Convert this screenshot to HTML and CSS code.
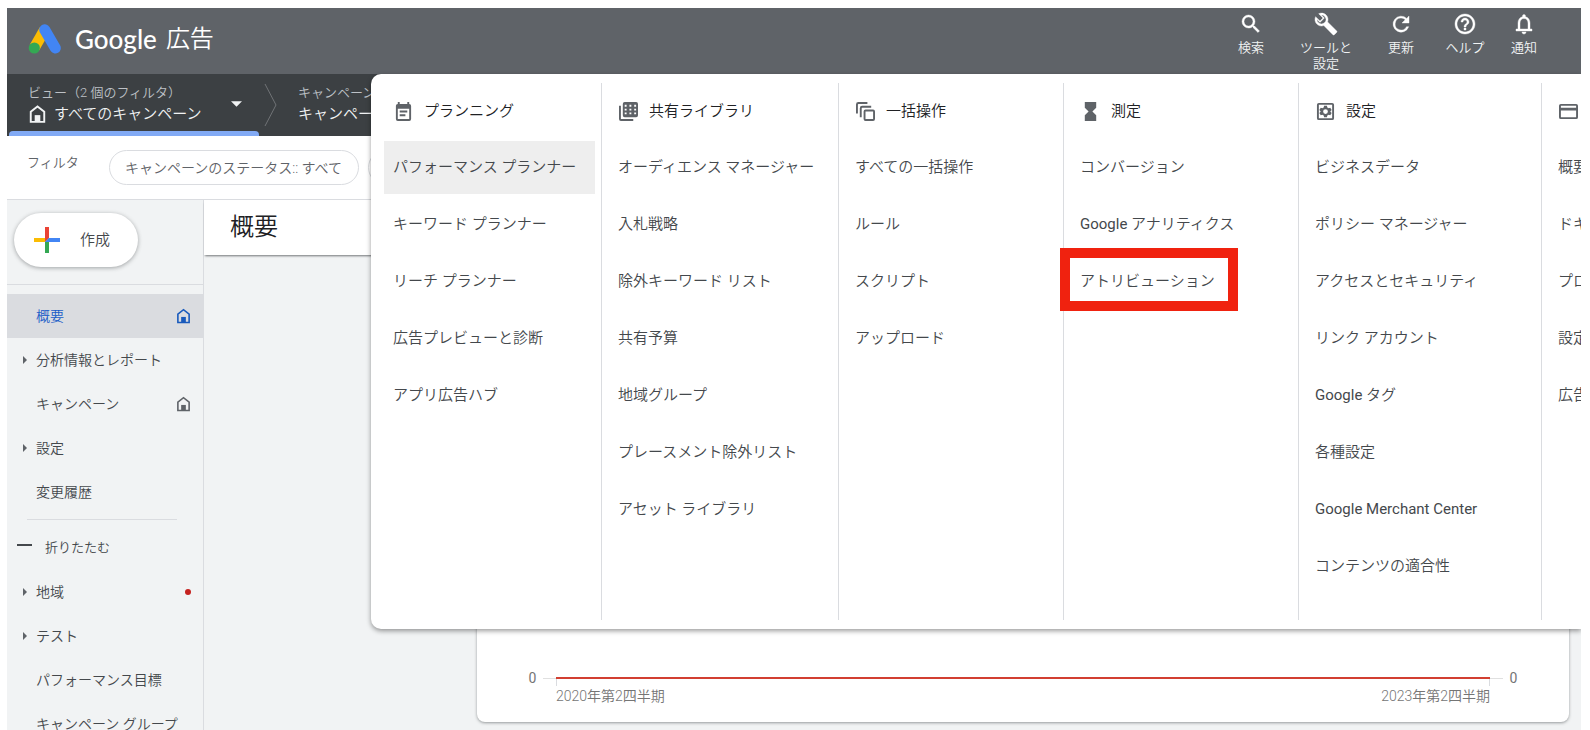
FILE: index.html
```html
<!DOCTYPE html>
<html lang="ja">
<head>
<meta charset="utf-8">
<title>Google 広告</title>
<link rel="stylesheet" href="styles.css">
</head>
<body>
<svg class="sprite" aria-hidden="true">
  <symbol id="house" viewBox="0 0 16 16"><path d="M2 15V6l6-4.700 6 4.700v9z" fill="none" stroke="currentColor" stroke-width="1.700"/><path d="M5.500 9h5v6h-5z" fill="currentColor"/></symbol>
</svg>
<div class="app">
  <header class="topbar">
    <a class="brand" href="#">
      <svg class="brand-mark" viewBox="0 0 34 32" aria-hidden="true">
        <path d="M16.500 7 6.500 24.500" stroke="#fbbc04" stroke-width="11"/>
        <circle cx="6.300" cy="25" r="5.600" fill="#34a853"/>
        <path d="M16.700 6.800 27.300 25" stroke="#4285f4" stroke-width="11" stroke-linecap="round"/>
      </svg>
      <span class="brand-google">Google</span>
      <span class="brand-product">広告</span>
    </a>
    <nav class="tools">
      <button class="tool tool-search"><svg viewBox="0 0 24 24"><path d="M15.500 14h-.79l-.28-.27A6.470 6.470 0 0 0 16 9.500 6.500 6.500 0 1 0 9.500 16c1.610 0 3.090-.59 4.230-1.570l.27.28v.79l5 4.990L20.490 19l-4.990-5zm-6 0C7.010 14 5 11.990 5 9.500S7.010 5 9.500 5 14 7.010 14 9.500 11.990 14 9.500 14z"/></svg><span>検索</span></button>
      <button class="tool tool-setup"><svg viewBox="0 0 24 24"><path fill-rule="evenodd" d="m22.700 19-9.100-9.100c.9-2.300.4-5-1.500-6.900-2-2-5-2.400-7.400-1.300L9 6 6 9 1.600 4.700C.4 7.100.9 10.100 2.900 12.100c1.900 1.900 4.600 2.400 6.900 1.500l9.100 9.100c.4.4 1 .4 1.400 0l2.300-2.300c.5-.4.500-1.100.1-1.400zM4.300 10.600c-.9-.9-1.300-2-1.300-3.200l3 3 4.400-4.400-3-3c1.200 0 2.400.4 3.300 1.400 1.800 1.800 1.800 4.500 0 6.200s-4.700 1.800-6.400 0z"/></svg><span>ツールと<br>設定</span></button>
      <button class="tool tool-refresh"><svg viewBox="0 0 24 24"><path d="M17.700 6.400A8 8 0 1 0 19.700 14.700h-2.200A6 6 0 1 1 12 6c1.700 0 3.100.7 4.200 1.800L13 11h7V4z"/></svg><span>更新</span></button>
      <button class="tool tool-help"><svg viewBox="0 0 24 24"><path d="M11 18h2v-2h-2v2zm1-16C6.480 2 2 6.480 2 12s4.480 10 10 10 10-4.480 10-10S17.520 2 12 2zm0 18c-4.410 0-8-3.590-8-8s3.590-8 8-8 8 3.590 8 8-3.590 8-8 8zm0-14c-2.210 0-4 1.790-4 4h2c0-1.100.9-2 2-2s2 .9 2 2c0 2-3 1.750-3 5h2c0-2.250 3-2.500 3-5 0-2.210-1.790-4-4-4z"/></svg><span>ヘルプ</span></button>
      <button class="tool tool-bell"><svg viewBox="0 0 24 24"><path d="M12 22c1.100 0 2-.9 2-2h-4c0 1.100.9 2 2 2zm6-6v-5c0-3.070-1.640-5.640-4.500-6.320V4a1.500 1.500 0 0 0-3 0v.68C7.630 5.360 6 7.920 6 11v6H4v2h16v-2h-2zm-2 1H8v-6c0-2.480 1.510-4.500 4-4.500s4 2.020 4 4.500v6z"/></svg><span>通知</span></button>
    </nav>
  </header>

  <div class="scopebar">
    <button class="scope scope-view">
      <span class="scope-text">
        <span class="scope-label">ビュー（2 個のフィルタ）</span>
        <span class="scope-value"><svg class="scope-house"><use href="#house"/></svg>すべてのキャンペーン</span>
      </span>
      <svg class="caret" viewBox="0 0 12 6"><path d="M0 0h12L6 6z"/></svg>
    </button>
    <svg class="chevron" viewBox="0 0 14 44"><path d="M1 1l11 21L1 43"/></svg>
    <button class="scope">
      <span class="scope-text">
        <span class="scope-label">キャンペーン</span>
        <span class="scope-value">キャンペーン</span>
      </span>
    </button>
  </div>

  <div class="filters">
    <span class="filters-label">フィルタ</span>
    <button class="chip">キャンペーンのステータス:: すべて</button>
    <button class="chip chip-add" aria-label="フィルタを追加"></button>
  </div>

  <div class="body">
    <aside class="sidebar">
      <div class="create-area">
        <button class="create">
          <svg viewBox="0 0 26 26"><path d="M11 0h4v11l-4 4z" fill="#ea4335"/><path d="M0 11h11v4H0z" fill="#fbbc04"/><path d="M11 15l4-4v15h-4z" fill="#34a853"/><path d="M15 11h11v4H11z" fill="#4285f4"/></svg>
          作成
        </button>
      </div>
      <nav class="side-nav">
        <a class="side-item active" href="#">概要<svg class="side-house"><use href="#house"/></svg></a>
        <a class="side-item expandable" href="#">分析情報とレポート</a>
        <a class="side-item" href="#">キャンペーン<svg class="side-house"><use href="#house"/></svg></a>
        <a class="side-item expandable" href="#">設定</a>
        <a class="side-item" href="#">変更履歴</a>
        <hr class="side-rule">
        <button class="collapse">折りたたむ</button>
        <a class="side-item expandable" href="#">地域<span class="dot"></span></a>
        <a class="side-item expandable" href="#">テスト</a>
        <a class="side-item" href="#">パフォーマンス目標</a>
        <a class="side-item" href="#">キャンペーン グループ</a>
      </nav>
    </aside>
    <main class="main">
      <h1 class="page-title">概要</h1>
      <section class="card">
        <div class="chart">
          <span class="axis-value">0</span>
          <div class="plot"><div class="series"></div></div>
          <span class="axis-value">0</span>
          <div class="dates"><span>2020年第2四半期</span><span>2023年第2四半期</span></div>
        </div>
      </section>
    </main>
  </div>

  <div class="mega">
    <section class="col">
      <h2><svg viewBox="0 0 20 20"><path fill-rule="evenodd" d="M4 0h2v2h8V0h2v2a2 2 0 0 1 2 2v14a2 2 0 0 1-2 2H4a2 2 0 0 1-2-2V4a2 2 0 0 1 2-2zM4 7v11h12V7zM6 9h8v2H6zM6 13h6v2H6z"/></svg>プランニング</h2>
      <ul>
        <li><a class="hover" href="#">パフォーマンス プランナー</a></li>
        <li><a href="#">キーワード プランナー</a></li>
        <li><a href="#">リーチ プランナー</a></li>
        <li><a href="#">広告プレビューと診断</a></li>
        <li><a href="#">アプリ広告ハブ</a></li>
      </ul>
    </section>
    <section class="col">
      <h2><svg viewBox="0 0 20 20"><path d="M0 4h2v14h13v2H2a2 2 0 0 1-2-2z"/><path fill-rule="evenodd" d="M6 0h12a2 2 0 0 1 2 2v12a2 2 0 0 1-2 2H6a2 2 0 0 1-2-2V2a2 2 0 0 1 2-2zM6 3v2h2V3zM11 3v2h2V3zM16 3v2h2V3zM6 7v2h2V7zM11 7v2h2V7zM16 7v2h2V7zM6 11v2h2v-2zM11 11v2h2v-2zM16 11v2h2v-2z"/></svg>共有ライブラリ</h2>
      <ul>
        <li><a href="#">オーディエンス マネージャー</a></li>
        <li><a href="#">入札戦略</a></li>
        <li><a href="#">除外キーワード リスト</a></li>
        <li><a href="#">共有予算</a></li>
        <li><a href="#">地域グループ</a></li>
        <li><a href="#">プレースメント除外リスト</a></li>
        <li><a href="#">アセット ライブラリ</a></li>
      </ul>
    </section>
    <section class="col">
      <h2><svg class="line" viewBox="0 0 20 20"><path d="M1 12V2.500A1.500 1.500 0 0 1 2.500 1H12"/><path d="M5 16V6.500A1.500 1.500 0 0 1 6.500 5H16"/><rect x="9" y="9" width="10" height="10" rx="1"/></svg>一括操作</h2>
      <ul>
        <li><a href="#">すべての一括操作</a></li>
        <li><a href="#">ルール</a></li>
        <li><a href="#">スクリプト</a></li>
        <li><a href="#">アップロード</a></li>
      </ul>
    </section>
    <section class="col">
      <h2><svg viewBox="0 0 20 20"><path d="M4 0h12v6l-4 4 4 4v6H4v-6l4-4-4-4z"/></svg>測定</h2>
      <ul>
        <li><a href="#">コンバージョン</a></li>
        <li><a href="#"><span class="latin">Google</span> アナリティクス</a></li>
        <li><a class="marked" href="#">アトリビューション</a></li>
      </ul>
    </section>
    <section class="col">
      <h2><svg viewBox="0 0 20 20"><path fill-rule="evenodd" d="M3 1h14a2 2 0 0 1 2 2v14a2 2 0 0 1-2 2H3a2 2 0 0 1-2-2V3a2 2 0 0 1 2-2zm0 2v14h14V3z"/><path fill-rule="evenodd" d="M8.500 4h3l.4 1.700 1.500.8 1.600-.5 1.500 2.500-1.300 1.200v.6l1.300 1.200-1.500 2.500-1.600-.5-1.500.8-.4 1.700h-3l-.4-1.700-1.500-.8-1.600.5-1.500-2.500 1.300-1.200v-.6L3.500 8.500 5 6l1.600.5 1.500-.8zM10 7.500a2.500 2.500 0 1 0 0 5 2.500 2.500 0 0 0 0-5z"/></svg>設定</h2>
      <ul>
        <li><a href="#">ビジネスデータ</a></li>
        <li><a href="#">ポリシー マネージャー</a></li>
        <li><a href="#">アクセスとセキュリティ</a></li>
        <li><a href="#">リンク アカウント</a></li>
        <li><a href="#"><span class="latin">Google</span> タグ</a></li>
        <li><a href="#">各種設定</a></li>
        <li><a class="latin" href="#">Google Merchant Center</a></li>
        <li><a href="#">コンテンツの適合性</a></li>
      </ul>
    </section>
    <section class="col">
      <h2><svg viewBox="0 0 20 20"><path fill-rule="evenodd" d="M2 2h16a2 2 0 0 1 2 2v12a2 2 0 0 1-2 2H2a2 2 0 0 1-2-2V4a2 2 0 0 1 2-2zm0 2v2h16V4zm0 5v7h16V9z"/></svg></h2>
      <ul>
        <li><a href="#">概要</a></li>
        <li><a href="#">ドキュメント</a></li>
        <li><a href="#">プロモーション</a></li>
        <li><a href="#">設定</a></li>
        <li><a href="#">広告主様の確認</a></li>
      </ul>
    </section>
  </div>
</div>
</body>
</html>
```
FILE: styles.css
```css
*, *::before, *::after { box-sizing: border-box; }

body {
  margin: 0;
  height: 100vh;
  padding: 8px 9px 0 7px;
  overflow: hidden;
  background: #fff;
  color: #44484c;
  font-family: Roboto, "Noto Sans CJK JP", sans-serif;
  font-size: 14px;
  font-weight: 350;
  line-height: 20px;
}

button {
  margin: 0;
  padding: 0;
  border: 0;
  background: none;
  color: inherit;
  font: inherit;
}

a { color: inherit; text-decoration: none; }
svg { display: block; flex: none; fill: currentColor; }
.sprite { display: none; }
.latin { font-weight: 400; }

.app {
  position: relative;
  display: flex;
  flex-direction: column;
  height: 100%;
  overflow: hidden;
}

/* Top bar */
.topbar {
  flex: none;
  display: flex;
  justify-content: space-between;
  height: 66px;
  padding: 0 28px 0 21px;
  background: #5f6368;
  color: #fff;
}

.brand { display: flex; align-items: center; height: 62px; }
.brand-mark { width: 34px; height: 32px; margin-right: 13px; fill: none; }
.brand-google { font: 500 26px/32px Lato, sans-serif; margin-right: 9px; }
.brand-product { font-size: 24px; line-height: 32px; }

.tools { display: flex; align-items: flex-start; padding-top: 4px; }
.tool {
  display: flex;
  flex-direction: column;
  align-items: center;
  gap: 4px;
  font-size: 13px;
  line-height: 16px;
  color: #f1f3f4;
}
.tool svg { width: 24px; height: 24px; color: #fff; stroke: currentColor; stroke-width: .4; }
.tool-search, .tool-refresh { width: 68px; }
.tool-setup { width: 82px; }
.tool-help { width: 60px; }
.tool-bell { width: 58px; }

/* Account scope */
.scopebar {
  flex: none;
  display: flex;
  align-items: center;
  height: 62px;
  background: #3c4043;
  color: #f1f3f4;
}
.scope { display: flex; align-items: center; height: 100%; padding-bottom: 2px; text-align: left; white-space: nowrap; }
.scope-view {
  position: relative;
  width: 257px;
  padding: 0 22px 2px 21px;
  justify-content: space-between;
}
.scope-view::after {
  content: "";
  position: absolute;
  left: 2px;
  right: 5px;
  bottom: 0;
  height: 5px;
  border-radius: 4px 4px 0 0;
  background: #82aaf5;
}
.scope-label { display: block; font-size: 13px; line-height: 20px; color: #bdc1c6; }
.scope-value { display: flex; align-items: center; gap: 7px; font-size: 15px; line-height: 22px; }
.scope-house { width: 19px; height: 18px; }
.caret { width: 11px; height: 6px; }
.chevron { width: 14px; height: 44px; margin-right: 20px; fill: none; stroke: #707376; }

/* Filters */
.filters {
  flex: none;
  display: flex;
  gap: 9px;
  height: 64px;
  padding: 14px 0 0 20px;
  border-bottom: 1px solid #dadce0;
  color: #5f6368;
  white-space: nowrap;
}
.filters-label { width: 73px; padding-top: 3px; font-size: 13px; }
.chip {
  height: 35px;
  padding: 0 16px 0 15px;
  border: 1px solid #dadce0;
  border-radius: 18px;
  background: #fff;
}
.chip-add { width: 120px; }

.body { flex: 1; display: flex; min-height: 0; background: #f1f3f4; }

/* Sidebar */
.sidebar { flex: none; width: 197px; border-right: 1px solid #dadce0; }
.create-area { padding: 13px 7px 17px; border-bottom: 1px solid #dadce0; }
.create {
  display: flex;
  align-items: center;
  gap: 20px;
  width: 124px;
  height: 54px;
  padding-left: 20px;
  border-radius: 27px;
  background: #fff;
  box-shadow: 0 1px 4px rgba(60, 64, 67, .45);
  font-size: 15px;
}
.create svg { width: 26px; height: 26px; }

.side-nav { padding-top: 9px; white-space: nowrap; }
.side-item {
  position: relative;
  display: flex;
  align-items: center;
  justify-content: space-between;
  height: 44px;
  padding: 0 12px 0 29px;
}
.side-house { width: 15px; height: 16px; color: #5f6368; }
.active { background: #dadce0; color: #1a5cc8; }
.active .side-house { color: #185abc; }
.expandable::before {
  content: "";
  position: absolute;
  left: 16px;
  top: 18px;
  border-left: 4px solid #5f6368;
  border-top: 4px solid transparent;
  border-bottom: 4px solid transparent;
}
.dot { width: 6px; height: 6px; border-radius: 50%; background: #c5221f; }
.side-rule { margin: 5px 26px 6px 20px; border: 0; border-top: 1px solid #dadce0; }
.collapse {
  display: flex;
  align-items: center;
  gap: 13px;
  height: 44px;
  padding-left: 10px;
  font-size: 13px;
}
.collapse::before { content: ""; width: 15px; height: 2px; margin-bottom: 6px; background: currentColor; }

/* Overview */
.main { flex: 1; min-width: 0; }
.page-title {
  margin: 0;
  height: 55px;
  padding: 10px 26px;
  background: #fff;
  box-shadow: 0 2px 2px -1px rgba(60, 64, 67, .7);
  color: #202124;
  font-size: 24px;
  font-weight: 350;
  line-height: 34px;
}
.card {
  margin: 25px 12px 0 273px;
  padding: 389px 51px 17px 51px;
  border-radius: 8px;
  background: #fff;
  box-shadow: 0 1px 3px rgba(60, 64, 67, .5);
}
.chart {
  display: grid;
  grid-template-columns: auto 1fr auto;
  column-gap: 6px;
  align-items: center;
  color: #757575;
}
.axis-value { width: 9px; line-height: 18px; font-weight: 400; text-align: center; }
.plot { height: 1px; padding: 0 13px; background: #e0e0e0; }
.series {
  position: relative;
  height: 8px;
  border: solid #dadce0;
  border-width: 0 1px;
}
.series::before {
  content: "";
  position: absolute;
  left: -1px;
  right: -1px;
  top: -1px;
  height: 2px;
  background: #d23f31;
}
.dates {
  grid-column: 2;
  display: flex;
  justify-content: space-between;
  padding: 0 13px;
  line-height: 18px;
}

/* Tools menu, laid over the page */
.mega {
  position: absolute;
  top: 66px;
  left: 364px;
  right: 0;
  display: grid;
  grid-template-columns: 231px 237px 225px 235px 243px 1fr;
  min-height: 555px;
  padding: 9px 0;
  overflow: clip;
  overflow-clip-margin: 8px;
  border-radius: 10px 0 0 10px;
  background: #fff;
  box-shadow: 0 2px 5px rgba(0, 0, 0, .4);
  font-size: 15px;
  white-space: nowrap;
}
.col { min-width: 0; padding: 0 7px; border-right: 1px solid #dadce0; }
.col:first-child { padding: 0 6px 0 13px; }
.col:last-child { border-right: 0; }
.col h2 {
  display: flex;
  align-items: center;
  gap: 11px;
  margin: 0;
  height: 58px;
  padding: 0 0 2px 10px;
  color: #202124;
  font-size: 15px;
  font-weight: 350;
}
.col h2 svg { width: 19px; height: 19px; color: #5f6368; }
.col h2 .line { fill: none; stroke: currentColor; stroke-width: 2; }
.col ul {
  display: grid;
  gap: 4px;
  margin: 0;
  padding: 0;
  list-style: none;
}
.col li a { position: relative; display: block; padding: 0 9px; line-height: 53px; }
.hover { background: #eee; }
.marked::after {
  content: "";
  position: absolute;
  top: -7px;
  bottom: -3px;
  left: -11px;
  width: 178px;
  border: 10px solid #f0220f;
}
```
